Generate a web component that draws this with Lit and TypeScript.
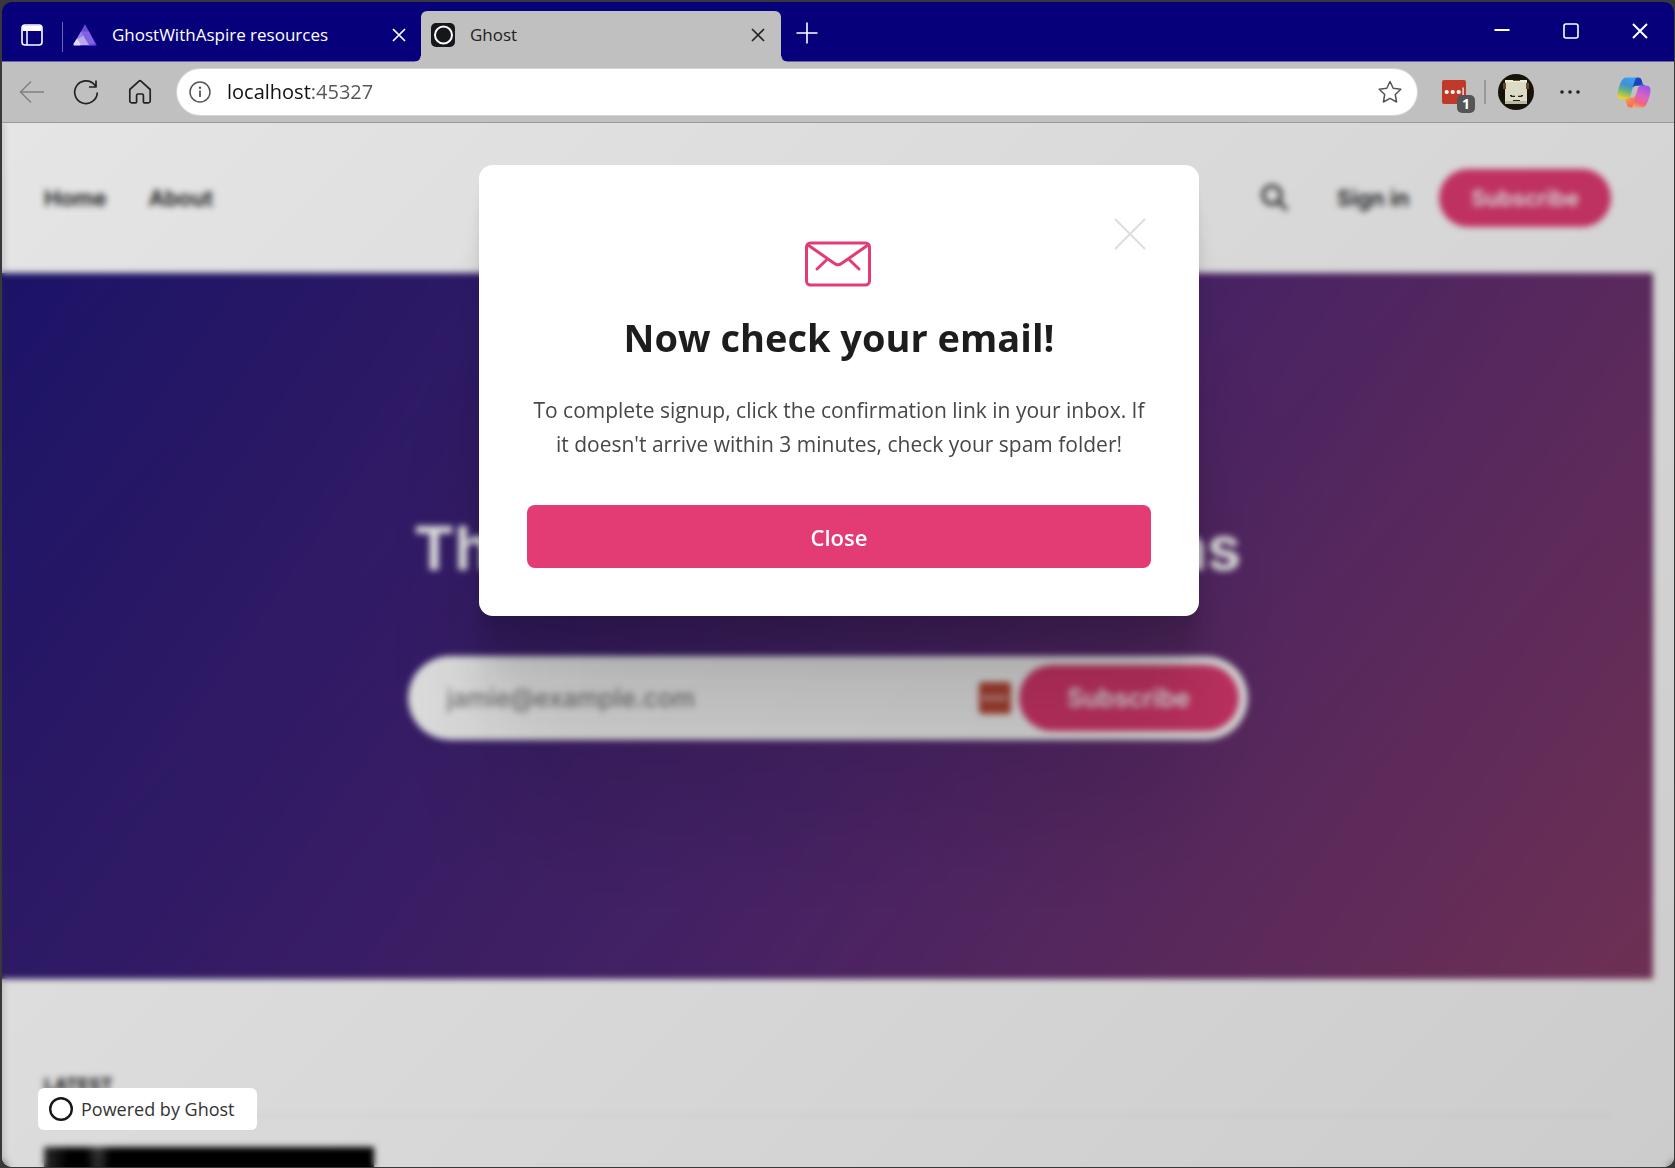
import { LitElement, html, css, svg } from "lit";
import { customElement, property } from "lit/decorators.js";

const closeGlyph = html`<svg class="x" viewBox="0 0 14 14" aria-hidden="true"><path d="M1 1 13 13M13 1 1 13" /></svg>`;

@customElement("browser-tabs")
class BrowserTabs extends LitElement {
  static styles = css`
    :host { display: flex; background: #06007a; color: #fff; font: 17px/24px "Open Sans", "Noto Sans", sans-serif; border-bottom: 1px solid #6a64a0; box-sizing: border-box; height: 60px; }
    button { border: 0; background: none; padding: 0; margin: 0; color: inherit; display: flex; align-items: center; justify-content: center; }
    svg { fill: none; stroke: currentColor; display: block; }
    .x { width: 14px; height: 14px; stroke-width: 1.7; }
    .menu { width: 60px; padding-top: 6px; }
    .menu svg { width: 22px; height: 22px; }
    .tab { display: flex; align-items: center; box-sizing: border-box; padding-top: 6px; }
    .tab span { flex: 1; white-space: nowrap; overflow: hidden; }
    .idle { width: 358px; padding-left: 10px; padding-right: 15px; position: relative; }
    .idle svg.logo { width: 24px; height: 22px; margin-right: 15px; stroke: none; }
    .bar { width: 1px; height: 30px; background: #6d69ad; margin-top: 20px; }
    .active { width: 360px; margin-top: 9px; margin-bottom: -1px; padding: 0 16px 4px 10px; background: #c0c0c0; color: #222; border-radius: 6px 6px 0 0; position: relative; }
    .active svg.logo { width: 24px; height: 24px; margin-right: 15px; }
    .active::before, .active::after { content: ""; position: absolute; bottom: 0; width: 6px; height: 6px; }
    .active::before { left: -6px; background: radial-gradient(circle at 0 0, transparent 5px, #c0c0c0 6px); }
    .active::after { right: -6px; background: radial-gradient(circle at 100% 0, transparent 5px, #c0c0c0 6px); }
    .plus { width: 52px; padding-top: 3px; }
    .plus svg { width: 22px; height: 22px; stroke-width: 2; }
    .win { margin-left: auto; display: flex; padding-bottom: 2px; }
    .win button { width: 69px; }
    .win svg { width: 16px; height: 16px; stroke-width: 2; }
  `;
  render() {
    return html`
      <button class="menu" aria-label="Tab actions">
        <svg viewBox="0 0 22 22"><rect x="1" y="1" width="20" height="20" rx="3" stroke-width="1.6" /><path d="M1.5 4a2.6 2.6 0 0 1 2.6-2.6h13.8A2.6 2.6 0 0 1 20.500 4v3h-19z" fill="#fff" stroke="none" /><path d="M6 6v15" stroke-width="1.500" /></svg>
      </button>
      <div class="bar"></div>
      <div class="tab idle">
        <svg class="logo" viewBox="0 0 24 22">
          <path d="M12 .5 23.500 20.500a1 1 0 0 1-.9 1.200H1.400a1 1 0 0 1-.9-1.200z" fill="#5c3bd8" />
          <path d="M12 .5 16 8H8z" fill="#6a4bd6" />
          <path d="M8 7.500h8l6 12-2 1h-5l-5-9z" fill="#8163e0" />
          <path d="M8 7.500 11.500 13 7 21.700H1.400a1 1 0 0 1-.9-1.200z" fill="#9780e5" />
          <path d="M10.500 12 16 21H7L4 15z" fill="#b9aaee" />
          <path d="M4 14.500 8 21H1.400a1 1 0 0 1-.9-1.200z" fill="#e0dcf8" />
        </svg>
        <span>GhostWithAspire resources</span>
        <button aria-label="Close GhostWithAspire resources">${closeGlyph}</button>
      </div>
      <div class="tab active">
        <svg class="logo" viewBox="0 0 24 24"><rect width="24" height="24" rx="5" fill="#15171a" stroke="none" /><circle cx="12.500" cy="12" r="8.500" stroke="#fff" stroke-width="2" /></svg>
        <span>Ghost</span>
        <button aria-label="Close Ghost">${closeGlyph}</button>
      </div>
      <button class="plus" aria-label="New tab"><svg viewBox="0 0 22 22"><path d="M11 .5v21M.5 11h21" stroke-width="1.600" /></svg></button>
      <div class="win">
        <button aria-label="Minimize"><svg viewBox="0 0 16 16"><path d="M.5 7h15" /></svg></button>
        <button aria-label="Maximize"><svg viewBox="0 0 16 16"><rect x="1" y="1" width="14" height="14" rx="2" stroke-width="1.600" /></svg></button>
        <button aria-label="Close window"><svg viewBox="0 0 16 16"><path d="M1 1 15 15M15 1 1 15" /></svg></button>
      </div>`;
  }
}

@customElement("browser-toolbar")
class BrowserToolbar extends LitElement {
  static styles = css`
    :host { display: flex; align-items: center; box-sizing: border-box; height: 61px; background: #c0c0c0; border-bottom: 1px solid #999; padding: 0 22px 0 16px; color: #222; }
    button { border: 0; background: none; padding: 0; margin: 0; color: inherit; display: block; }
    svg { display: block; fill: none; stroke: currentColor; stroke-width: 2; }
    .nav { display: flex; gap: 26px; align-items: center; }
    .nav svg { width: 28px; height: 28px; }
    .back { color: #808080; }
    .address { flex: 1; display: flex; align-items: center; gap: 16px; height: 46px; box-sizing: border-box; margin: 0 25px 0 23px; padding: 0 15px 0 12px; border-radius: 23px; background: #fff; box-shadow: 0 0 0 1px #d4d4d4; }
    .address svg { width: 24px; height: 24px; color: #555; stroke-width: 1.5; }
    .address .info svg { width: 22px; height: 22px; }
    input { flex: 1; min-width: 0; border: 0; outline: 0; padding: 0; font: 20px/30px "Open Sans", "Noto Sans", sans-serif; color: transparent; background: linear-gradient(90deg, #111 85px, #555 85px); -webkit-background-clip: text; background-clip: text; }
    .ext { position: relative; }
    .ext svg { width: 24px; height: 24px; }
    .count { position: absolute; left: 15px; top: 15px; width: 18px; height: 18px; border-radius: 5px; background: #555; color: #fff; font: 700 14px/18px "Open Sans", sans-serif; text-align: center; }
    .bar { width: 2px; height: 24px; background: #999; margin: 0 12px 0 18px; }
    .avatar svg { width: 36px; height: 36px; }
    .more { margin: 0 34px 0 24px; }
    .more svg { width: 24px; height: 24px; fill: currentColor; stroke: none; }
    .copilot svg { width: 36px; height: 33px; stroke: none; }
  `;
  render() {
    return html`
      <div class="nav">
        <button class="back" aria-label="Back"><svg viewBox="0 0 28 28"><path d="M26 14H2.500M13 3.500 2.500 14 13 24.500" stroke-width="1.500" /></svg></button>
        <button aria-label="Refresh"><svg viewBox="0 0 28 28"><path d="M25.300 14.500a11.300 11.300 0 1 1-2.600-7.500l1.300 1.800M24 2.500v6.500h-7" stroke-width="1.700" stroke-linejoin="round" /></svg></button>
        <button aria-label="Home"><svg viewBox="0 0 28 28"><path d="M3.800 11.500 13 3.200a1.500 1.500 0 0 1 2 0l9.200 8.300V23a1.800 1.800 0 0 1-1.800 1.800h-4a1 1 0 0 1-1-1V17.500a1.500 1.500 0 0 0-1.500-1.500h-3.800a1.500 1.500 0 0 0-1.500 1.500v6.300a1 1 0 0 1-1 1h-4A1.800 1.800 0 0 1 3.800 23z" stroke-width="1.700" stroke-linejoin="round" /></svg></button>
      </div>
      <div class="address">
        <button class="info" aria-label="View site information"><svg viewBox="0 0 22 22"><circle cx="11" cy="11" r="10" /><path d="M11 9.500V16" stroke-width="1.800" /><circle cx="11" cy="6.700" r="1.200" fill="currentColor" stroke="none" /></svg></button>
        <input type="text" aria-label="Address" .value=${"localhost:45327"} />
        <button aria-label="Add to favorites"><svg viewBox="0 0 24 24"><path d="M12 1.500 15.200 8.300 22.800 9.300 17.300 14.500 18.600 22 12 18.400 5.400 22 6.700 14.500 1.200 9.300 8.800 8.300z" stroke-linejoin="round" /></svg></button>
      </div>
      <button class="ext" aria-label="Password manager, 1 notification">
        <svg viewBox="0 0 24 24"><rect width="24" height="24" rx="2" fill="#bf3a2b" stroke="none" /><g fill="#fff" stroke="none"><circle cx="4.700" cy="12" r="2.100" /><circle cx="10.700" cy="12" r="2.100" /><circle cx="16.700" cy="12" r="2.100" /><path d="M20.500 7.500h1.200v9h-1.200z" /></g></svg>
        <span class="count">1</span>
      </button>
      <div class="bar"></div>
      <button class="avatar" aria-label="Profile">
        <svg viewBox="0 0 36 36"><g stroke="none"><circle cx="18" cy="18" r="18" fill="#17120a" /><path d="M7 6h22v24H7z" fill="#dcdcc6" /><path d="M7 6h22v2H7z" fill="#efeedd" /><path d="M5 9h3v6H5zM28 9h3v6h-3z" fill="#6b4a26" /><path d="M7 27h22v3H7z" fill="#b8b9a0" /><path d="M15 6h7v1h-7z" fill="#6b4a26" /><path d="M12 21h5v2h-5zM20 21h5v2h-5z" fill="#9aa595" /><path d="M13 22h4v1h-4zM20 22h4v1h-4zM15 26h7v1h-7zM12 21h2v1h-2zM23 21h2v1h-2z" fill="#222" /></g></svg>
      </button>
      <button class="more" aria-label="Settings and more"><svg viewBox="0 0 24 24"><circle cx="4" cy="12" r="1.800" /><circle cx="12" cy="12" r="1.800" /><circle cx="20" cy="12" r="1.800" /></svg></button>
      <button class="copilot" aria-label="Copilot">
        <svg viewBox="0 2 48 44">
          <defs>
            <linearGradient id="a" x1="0" y1="0" x2="1" y2="1"><stop offset="0" stop-color="#1c50c4" /><stop offset=".5" stop-color="#1b3fb5" /><stop offset="1" stop-color="#5aa5f5" /></linearGradient>
            <linearGradient id="b" x1="0" y1="0" x2="1" y2="1"><stop offset="0" stop-color="#ffb34d" /><stop offset="1" stop-color="#f0605f" /></linearGradient>
            <linearGradient id="c" x1=".6" y1="0" x2=".3" y2="1"><stop offset="0" stop-color="#3aa0f0" /><stop offset=".35" stop-color="#4190d8" /><stop offset=".6" stop-color="#5fb284" /><stop offset="1" stop-color="#f5d423" /></linearGradient>
            <linearGradient id="d" x1=".7" y1="0" x2=".3" y2="1"><stop offset="0" stop-color="#a054e8" /><stop offset=".45" stop-color="#d965c4" /><stop offset=".75" stop-color="#f0647c" /><stop offset="1" stop-color="#f5a560" /></linearGradient>
          </defs>
          <path fill="url(#a)" d="M34.142 7.325A4.630 4.630 0 0 0 29.700 4h-1.351a4.630 4.630 0 0 0-4.554 3.794L21.480 20.407l.575-1.965a4.630 4.630 0 0 1 4.444-3.333h7.874l3.294 1.270 3.176-1.270h-.927a4.630 4.630 0 0 1-4.443-3.325z" />
          <path fill="url(#b)" d="M14.330 40.656A4.630 4.630 0 0 0 18.779 44h2.870a4.630 4.630 0 0 0 4.620-4.517l.313-14.038-.63 2.154a4.630 4.630 0 0 1-4.463 3.346h-7.920l-2.823-1.532-3.057 1.532h.910a4.630 4.630 0 0 1 4.449 3.344z" />
          <path fill="url(#c)" d="M29.499 4H13.466C8.885 4 6.136 10.057 4.303 16.113 2.132 23.289-.708 32.885 7.510 32.885h6.877c2.083 0 3.912-1.376 4.473-3.382 1.186-4.246 3.264-11.651 4.898-17.290.830-2.865 1.522-5.326 2.583-6.858C26.936 4.496 27.928 4 29.499 4z" />
          <path fill="url(#d)" d="M18.497 44h16.034c4.581 0 7.330-6.056 9.162-12.113 2.171-7.175 5.012-16.772-3.206-16.772h-6.877c-2.083 0-3.912 1.376-4.474 3.382-1.185 4.246-3.263 11.651-4.897 17.290-.830 2.865-1.522 5.326-2.583 6.858C21.061 43.504 20.069 44 18.497 44z" />
        </svg>
      </button>`;
  }
}

@customElement("ghost-site")
class GhostSite extends LitElement {
  static styles = css`
    :host { display: block; background: #fff; color: #15171a; font: 600 22px/30px Inter, sans-serif; padding-right: 21px; }
    a { color: inherit; text-decoration: none; }
    button { border: 0; margin: 0; font: inherit; border-radius: 50px; background: #e33b73; color: #fff; }
    header { display: flex; align-items: center; justify-content: space-between; height: 150px; padding: 0 42px; }
    nav, .account { display: flex; align-items: center; }
    nav { gap: 42px; }
    .search { background: none; color: #15171a; padding: 0; margin-right: 48px; }
    .search svg { display: block; width: 28px; height: 28px; fill: none; stroke: currentColor; stroke-width: 3; }
    .account .join { margin-left: 30px; height: 58px; padding: 0 32px; }
    .hero { height: 706px; display: flex; flex-direction: column; align-items: center; justify-content: center; gap: 72px; background: linear-gradient(125deg, #1f1674 0%, #522876 55%, #883c68 100%); box-sizing: border-box; }
    h1 { margin: 0; font-size: 61px; line-height: 72px; font-weight: 700; color: #fff; white-space: nowrap; }
    form { display: flex; align-items: center; box-sizing: border-box; width: 840px; max-width: 90%; height: 84px; padding: 0 9px 0 39px; border-radius: 42px; background: #fff; }
    input { flex: 1; min-width: 0; border: 0; outline: 0; padding: 0; background: none; font: 500 25px/36px Inter, sans-serif; }
    input::placeholder { color: #888; opacity: 1; }
    form svg { width: 32px; height: 32px; margin-right: 8px; }
    form button { width: 220px; height: 66px; font-size: 25px; }
    .latest { padding: 91px 42px 0; }
    h2 { margin: 0; font-size: 18px; line-height: 30px; font-weight: 700; text-transform: uppercase; padding-bottom: 15px; border-bottom: 1px solid #e8e8e8; }
    .thumb { margin-top: 31px; width: 330px; height: 220px; background: radial-gradient(ellipse 12px 60px at 54px 0, #444 0, transparent 100%), linear-gradient(90deg, #333 0, #000 24px); }
  `;
  render() {
    return html`
      <header>
        <nav><a href="#home">Home</a><a href="#about">About</a></nav>
        <div class="account">
          <button class="search" aria-label="Search"><svg viewBox="0 0 28 28"><circle cx="11" cy="11" r="9" /><path d="m17 17 9 9" /></svg></button>
          <a href="#signin">Sign in</a>
          <button class="join">Subscribe</button>
        </div>
      </header>
      <section class="hero">
        <h1>Thoughts, stories and ideas</h1>
        <form @submit=${(e: Event) => e.preventDefault()}>
          <input type="email" placeholder="jamie@example.com" aria-label="Email address" />
          <svg viewBox="0 0 32 32" aria-hidden="true"><rect width="32" height="32" rx="3" fill="#bf4a38" /><path d="M4 16h24" stroke="#fff" stroke-width="3" stroke-dasharray="5 2" /></svg>
          <button>Subscribe</button>
        </form>
      </section>
      <section class="latest">
        <h2>Latest</h2>
        <div class="thumb"></div>
      </section>`;
  }
}

@customElement("signup-dialog")
class SignupDialog extends LitElement {
  @property() heading = "";
  static styles = css`
    :host { display: block; position: relative; box-sizing: border-box; width: 720px; max-width: 94%; padding: 76px 48px 48px; border-radius: 14px; background: #fff; text-align: center; font-family: "Open Sans", "Noto Sans", sans-serif;
      box-shadow: 0 6px 3px rgba(0,0,0,.028), 0 14px 8px rgba(0,0,0,.04), 0 26px 15px rgba(0,0,0,.05), 0 46px 27px rgba(0,0,0,.06), 0 86px 50px rgba(0,0,0,.072), 0 207px 120px rgba(0,0,0,.1); }
    .dismiss { position: absolute; top: 53px; right: 53px; border: 0; background: none; padding: 0; }
    svg { display: block; fill: none; }
    .dismiss svg { width: 32px; height: 32px; stroke: #ddd; stroke-width: 2; }
    .mail { width: 68px; height: 46px; margin: 0 auto; stroke: #e33b73; stroke-width: 3; stroke-linejoin: round; stroke-linecap: round; }
    h2 { margin: 20px 0 0; font-size: 38px; line-height: 60px; font-weight: 700; color: #1d1d1d; }
    p { margin: 26px 0 0; font-size: 21px; line-height: 34px; color: #474747; }
    .close { display: block; width: 100%; height: 63px; margin-top: 44px; border: 0; border-radius: 8px; background: #e33b73; color: #fff; font: 600 22px/30px "Open Sans", "Noto Sans", sans-serif; }
  `;
  render() {
    return html`
      <button class="dismiss" aria-label="Dismiss"><svg viewBox="0 0 32 32"><path d="M1 1 31 31M31 1 1 31" /></svg></button>
      <svg class="mail" viewBox="0 0 68 46" aria-hidden="true"><rect x="1.500" y="2" width="63" height="42" rx="4" /><path d="M3 4 29.500 22.500a6 6 0 0 0 7 0L63 4M22.500 18 12 28M43.500 18 54 28" /></svg>
      <h2>${this.heading}</h2>
      <p>To complete signup, click the confirmation link in your inbox. If it doesn't arrive within 3 minutes, check your spam folder!</p>
      <button class="close">Close</button>`;
  }
}

@customElement("app-root")
class AppRoot extends LitElement {
  static styles = css`
    :host { display: flex; box-sizing: border-box; height: 100vh; padding: 2px 1px 1px 2px; background: #38383a; overflow: hidden; }
    .window { flex: 1; min-width: 0; display: flex; flex-direction: column; border-radius: 10px; overflow: hidden; }
    .page { flex: 1; min-height: 0; position: relative; overflow: hidden; background: #fff; }
    .overlay { position: absolute; inset: 0; display: flex; align-items: flex-start; justify-content: center; padding-top: 42px; padding-left: 2px; background: linear-gradient(315deg, rgba(0,0,0,.2), rgba(0,0,0,.1)); backdrop-filter: blur(3px); }
    .powered { position: absolute; left: 36px; bottom: 37px; display: flex; align-items: center; gap: 8px; box-sizing: border-box; height: 42px; padding: 0 22px 0 11px; border-radius: 6px; background: #fff; color: #333; font: 500 18px/24px "Open Sans", "Noto Sans", sans-serif; text-decoration: none; }
    .powered svg { width: 24px; height: 24px; fill: none; stroke: #15171a; stroke-width: 2.4; }
  `;
  render() {
    return html`
      <div class="window">
        <browser-tabs></browser-tabs>
        <browser-toolbar></browser-toolbar>
        <main class="page">
          <ghost-site></ghost-site>
          <div class="overlay"><signup-dialog role="dialog" heading="Now check your email!"></signup-dialog></div>
          <a class="powered" href="#ghost"><svg viewBox="0 0 24 24" aria-hidden="true">${svg`<circle cx="12" cy="12" r="10.800" />`}</svg>Powered by Ghost</a>
        </main>
      </div>`;
  }
}
